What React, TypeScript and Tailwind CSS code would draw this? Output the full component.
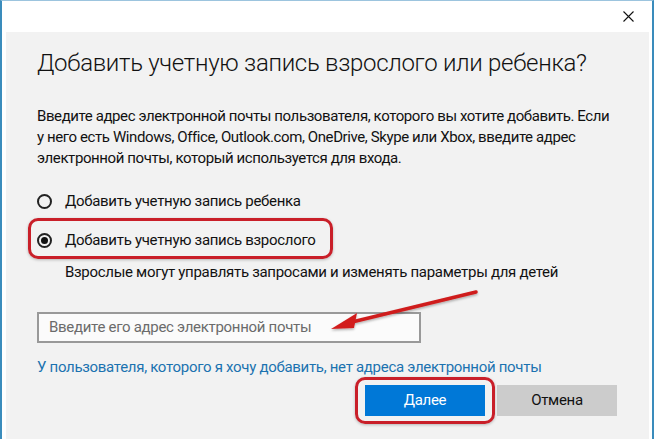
import React from 'react';

const font = { fontFamily: 'Roboto, "Liberation Sans", sans-serif' };

const Radio: React.FC<{ checked?: boolean; label: string }> = ({ checked, label }) => (
  <label className="flex items-center gap-[13px] h-[24px]">
    <span className="w-[15px] h-[15px] rounded-full border-2 border-[#222] flex items-center justify-center shrink-0">
      {checked && <span className="w-[7px] h-[7px] rounded-full bg-[#111]" />}
    </span>
    <span className="text-[15px] leading-[24px] text-[#111]">{label}</span>
  </label>
);

const App: React.FC = () => {
  return (
    <div
      className="relative w-[654px] h-[439px] overflow-hidden bg-white border-l-2 border-r-2 border-t border-l-[#3a8cbc] border-r-[#3a8cbc] border-t-[#9cc4de] flex flex-col tracking-[-0.3px]"
      style={font}
    >
      {/* Title bar */}
      <div className="h-[31px] flex justify-end items-center pr-[18px] shrink-0">
        <svg width="11" height="11" viewBox="0 0 11 11">
          <path d="M0.5 0.5 L10.5 10.5 M10.5 0.5 L0.5 10.5" stroke="#111" strokeWidth="1.1" />
        </svg>
      </div>

      {/* Content */}
      <div className="flex-1 bg-[#f2f2f2] ml-[4px] mr-[3px] pl-[31px] pr-[20px] pt-[15px]">
        <h1 className="text-[24px] leading-[32px] font-light text-[#111]">
          Добавить учетную запись взрослого или ребенка?
        </h1>

        <p className="mt-[27px] text-[15px] leading-[21px] text-[#111] whitespace-nowrap tracking-[-0.4px]">
          Введите адрес электронной почты пользователя, которого вы хотите добавить. Если
          <br />
          у него есть Windows, Office, Outlook.com, OneDrive, Skype или Xbox, введите адрес
          <br />
          электронной почты, который используется для входа.
        </p>

        <div className="mt-[20px] flex flex-col gap-[15px]">
          <Radio label="Добавить учетную запись ребенка" />
          <div className="relative">
            <Radio checked label="Добавить учетную запись взрослого" />
            <div className="absolute left-[-9px] top-[-10px] w-[305px] h-[41px] rounded-[10px] border-[3px] border-[#c91f29] shadow-[0_1px_3px_rgba(0,0,0,0.25)]" />
          </div>
        </div>

        <p className="mt-[10px] ml-[28px] text-[15px] leading-[20px] text-[#111]">
          Взрослые могут управлять запросами и изменять параметры для детей
        </p>

        <div className="mt-[30px] w-[384px] h-[31px] border-2 border-[#999] bg-[#fbfbfb] flex items-center pl-[10px]">
          <span className="text-[15px] text-[#6b6b6b]">Введите его адрес электронной почты</span>
        </div>

        <a className="block mt-[14px] text-[15px] leading-[20px] text-[#1b72b0]">
          У пользователя, которого я хочу добавить, нет адреса электронной почты
        </a>

        <div className="mt-[8px] flex justify-end gap-[12px] pr-[12px]">
          <div className="relative">
            <button className="w-[120px] h-[31px] bg-[#0078d7] text-white text-[15px]">Далее</button>
            <div className="absolute left-[-10px] top-[-8px] w-[140px] h-[47px] rounded-[10px] border-[3px] border-[#c91f29] shadow-[0_1px_3px_rgba(0,0,0,0.25)]" />
          </div>
          <button className="w-[120px] h-[31px] bg-[#cccccc] text-[#111] text-[15px]">Отмена</button>
        </div>
      </div>

      {/* Annotation arrow */}
      <svg className="absolute left-0 top-0 pointer-events-none" width="654" height="439">
        <defs>
          <filter id="sh" x="-10%" y="-10%" width="120%" height="130%">
            <feDropShadow dx="0" dy="1.5" stdDeviation="1.2" floodColor="#000" floodOpacity="0.3" />
          </filter>
        </defs>
        <g filter="url(#sh)">
          <line x1="474" y1="291" x2="350" y2="321" stroke="#cf1d1d" strokeWidth="3.5" strokeLinecap="round" />
          <polygon points="329,328 355,312 352,327" fill="#d21f1f" />
        </g>
      </svg>
    </div>
  );
};

export default App;
